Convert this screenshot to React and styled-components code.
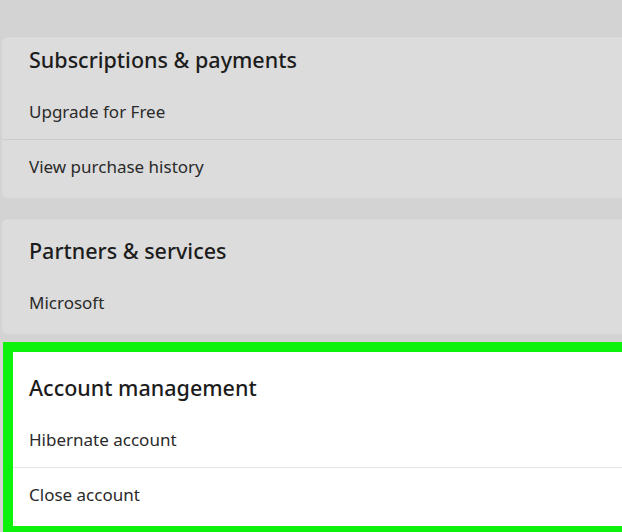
import styled, { createGlobalStyle } from 'styled-components';

const Global = createGlobalStyle`
  html, body { margin: 0; padding: 0; background: #d3d3d3; overflow: hidden; }
  body { font-family: "Noto Sans", "Open Sans", sans-serif; color: #1c1c1c; }
`;

const Page = styled.div`
  width: 622px;
  height: 532px;
  overflow: hidden;
  padding: 36px 0 0 2px;
  box-sizing: border-box;
  display: flex;
  flex-direction: column;
  gap: 20px;
`;

const Card = styled.section`
  width: 660px;
  background: ${(p) => (p.$highlight ? '#ffffff' : '#dcdcdc')};
  border-radius: 6px;
  border-top: 1px solid ${(p) => (p.$highlight ? '#fff' : '#cfcfcf')};
  box-sizing: border-box;
  ${(p) =>
    p.$highlight &&
    `outline: 10px solid #0df20d; margin: -2px 0 0 11px; width: 650px; border-radius: 0;`}
`;

const Title = styled.h2`
  margin: 0;
  font-size: 21.5px;
  font-weight: 500;
  padding: ${(p) => p.$top}px 0 10px ${(p) => (p.$highlight ? 16 : 27)}px;
  line-height: 30px;
`;

const Row = styled.div`
  font-size: 17px;
  line-height: 22px;
  padding: 16px 0 ${(p) => (p.$last ? 20 : 16)}px ${(p) => (p.$highlight ? 16 : 27)}px;
  border-top: ${(p) => (p.$divider ? `1px solid ${p.$highlight ? '#e6e6e6' : '#cbcbcb'}` : 'none')};
  color: #2a2a2a;
`;

const sections = [
  { title: 'Subscriptions & payments', items: ['Upgrade for Free', 'View purchase history'], top: 8 },
  { title: 'Partners & services', items: ['Microsoft'], top: 17 },
  { title: 'Account management', items: ['Hibernate account', 'Close account'], top: 20, highlight: true },
];

export default function App() {
  return (
    <>
      <Global />
      <Page>
        {sections.map((s) => (
          <Card key={s.title} $highlight={s.highlight}>
            <Title $highlight={s.highlight} $top={s.top}>{s.title}</Title>
            {s.items.map((item, i) => (
              <Row
                key={item}
                $divider={i > 0}
                $last={i === s.items.length - 1}
                $highlight={s.highlight}
              >
                {item}
              </Row>
            ))}
          </Card>
        ))}
      </Page>
    </>
  );
}
